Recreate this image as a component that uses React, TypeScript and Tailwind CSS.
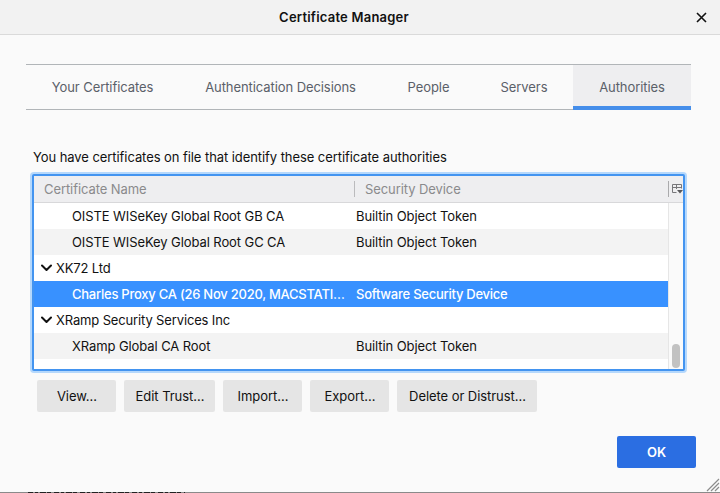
import React from "react";

type Row = { name: string; device?: string; group?: boolean; selected?: boolean; striped?: boolean };

const rows: Row[] = [
  { name: "OISTE WISeKey Global Root GB CA", device: "Builtin Object Token" },
  { name: "OISTE WISeKey Global Root GC CA", device: "Builtin Object Token", striped: true },
  { name: "XK72 Ltd", group: true },
  { name: "Charles Proxy CA (26 Nov 2020, MACSTATI…", device: "Software Security Device", selected: true },
  { name: "XRamp Security Services Inc", group: true },
  { name: "XRamp Global CA Root", device: "Builtin Object Token", striped: true },
];

const tabs = [
  { label: "Your Certificates", width: "w-[153px]" },
  { label: "Authentication Decisions", width: "w-[203px]" },
  { label: "People", width: "w-[93px]" },
  { label: "Servers", width: "w-[98px]" },
  { label: "Authorities", width: "w-[118px]", active: true },
];

const actions = [
  { label: "View…", width: "w-[79px]" },
  { label: "Edit Trust…", width: "w-[91px]" },
  { label: "Import…", width: "w-[79px]" },
  { label: "Export…", width: "w-[79px]" },
  { label: "Delete or Distrust…", width: "w-[140px]" },
];

function Chevron() {
  return (
    <svg className="ml-[7px] mr-[4px] shrink-0" width="11" height="8" viewBox="0 0 11 8" fill="none">
      <path d="M1 1.5 5.5 6 10 1.5" stroke="#111" strokeWidth="2" strokeLinecap="round" strokeLinejoin="round" />
    </svg>
  );
}

function TreeRow({ row }: { row: Row }) {
  const tone = row.selected
    ? "bg-[#3891ff] text-white font-medium tracking-[-0.25px]"
    : row.striped
      ? "bg-[#f3f3f3] tracking-[-0.09px]"
      : "bg-white tracking-[-0.09px]";
  if (row.group) {
    return (
      <div className={`flex h-[26px] shrink-0 items-center ${tone}`}>
        <Chevron />
        <span className="tracking-[-0.14px]">{row.name}</span>
      </div>
    );
  }
  return (
    <div className={`flex h-[26px] shrink-0 items-center ${tone}`}>
      <span className="w-[322px] shrink-0 whitespace-nowrap pl-[38px]">{row.name}</span>
      <span>{row.device}</span>
    </div>
  );
}

export default function App() {
  return (
    <div className="flex h-[493px] w-[720px] flex-col overflow-hidden bg-[#fafafa] font-['Inter','Liberation_Sans',sans-serif] text-[13px] leading-[18px] text-[#111]">
      <header className="flex h-[35px] shrink-0 items-center border-b border-[#dadada] bg-[#f2f2f2]">
        <h1 className="flex-1 pr-[8px] text-center font-semibold tracking-[0.22px]">Certificate Manager</h1>
        <button className="mr-[13px] flex w-[11px]" aria-label="Close">
          <svg width="11" height="11" viewBox="0 0 11 11">
            <path d="M1 1 10 10M10 1 1 10" stroke="#111" strokeWidth="1.6" />
          </svg>
        </button>
      </header>

      <nav className="ml-[26px] mt-[29px] flex h-[46px] w-[665px] shrink-0 border-y border-[#b1b5b8] tracking-[-0.08px] text-[#5a6069]">
        {tabs.map((t) => (
          <div
            key={t.label}
            className={`flex h-[45px] items-center justify-center whitespace-nowrap ${t.width} ${
              t.active ? "border-b-4 border-[#458eea] bg-[#eeeef0] pt-[2px]" : "pb-[2px]"
            }`}
          >
            {t.label}
          </div>
        ))}
      </nav>

      <p className="ml-[33px] mt-[38px] shrink-0 whitespace-nowrap tracking-[-0.07px]">
        You have certificates on file that identify these certificate authorities
      </p>

      <section className="ml-[32px] mt-[8px] flex h-[197px] w-[653px] shrink-0 flex-col overflow-hidden rounded-[2px] border-2 border-[#4394f0] bg-white ring-2 ring-[#b5d8fc]">
        <div className="flex h-[27px] shrink-0 items-center border-b border-[#d8d8da] bg-[#eeeef0] tracking-[-0.08px] text-[#8a8a8c]">
          <span className="w-[320px] pl-[10px]">Certificate Name</span>
          <span className="h-[16px] w-px bg-[#bbbbbd]" />
          <span className="w-[313px] pl-[10px]">Security Device</span>
          <span className="h-[16px] w-px bg-[#aaaaac]" />
          <svg className="ml-[3px]" width="11" height="10" viewBox="0 0 11 10" fill="none">
            <path d="M4.500 8.500H.5V.5H9.500V4.500M.5 3.500H9.500M4.500 .5V5" stroke="#77777a" />
            <path d="M5 6H11L8 9.500Z" fill="#58585b" />
          </svg>
        </div>
        <div className="flex min-h-0 flex-1">
          <div className="w-[634px] overflow-hidden">
            {rows.map((r) => (
              <TreeRow key={r.name} row={r} />
            ))}
          </div>
          <div className="flex w-[15px] items-end justify-center border-l border-[#e6e6e6] bg-[#fafafa] pb-px">
            <div className="h-[24px] w-[8px] rounded-full bg-[#c2c2c2]" />
          </div>
        </div>
      </section>

      <div className="ml-[37px] mt-[9px] flex shrink-0 gap-[8px] tracking-[-0.06px]">
        {actions.map((a) => (
          <button key={a.label} className={`h-[32px] whitespace-nowrap rounded-[2px] bg-[#e5e5e5] pl-px ${a.width}`}>
            {a.label}
          </button>
        ))}
      </div>

      <div className="mt-[24px] flex shrink-0 justify-end pr-[24px]">
        <button className="h-[32px] w-[79px] rounded-[2px] bg-[#2b6ee2] font-semibold text-white">OK</button>
      </div>

      <footer className="mt-auto flex flex-col">
        <svg className="ml-auto" width="14" height="14" viewBox="0 0 14 14">
          <path d="M1 13 13 1M5 13 13 5M9 13 13 9" stroke="#8c8c8c" strokeWidth="1.200" />
        </svg>
        <div className="flex h-px bg-[#8a8a8a] pl-[28px]">
          <svg width="157" height="1">
            <path d="M0 .5H157" stroke="#222" strokeDasharray="5 2 3 2 6 1 4 3" />
          </svg>
        </div>
      </footer>
    </div>
  );
}
